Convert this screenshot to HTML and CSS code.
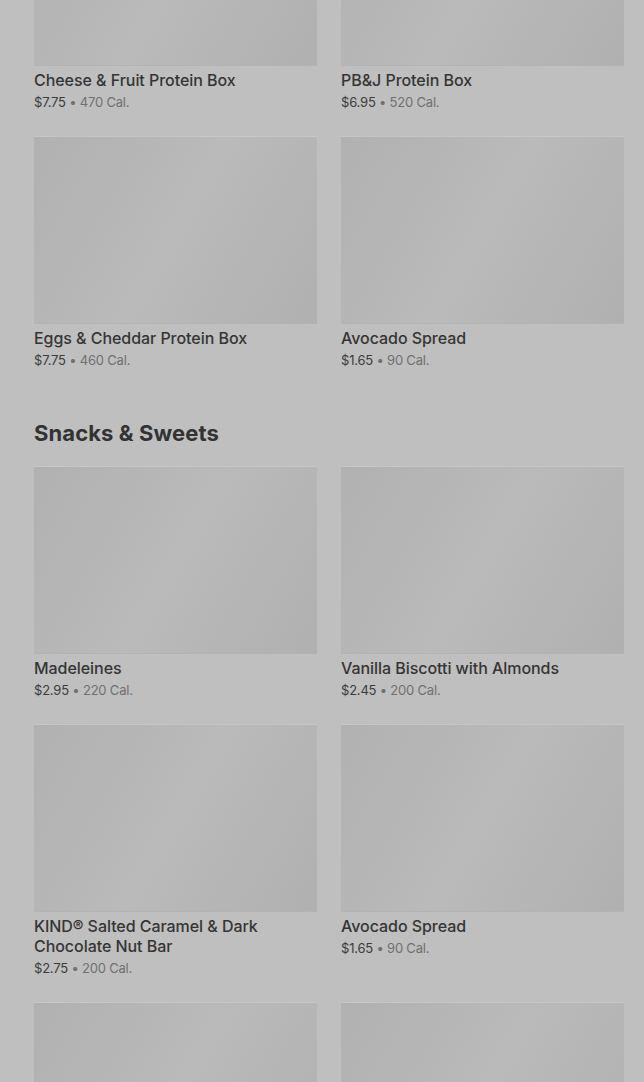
FILE: index.html
```html
<!DOCTYPE html>
<html>
<head>
  <title>Menu</title>
  <link rel="stylesheet" href="styles.css">
</head>
<body>
  <div class="menu">
    <section class="category first">
      <div class="items">
        <div class="item">
          <div class="thumb"></div>
          <div class="name">Cheese &amp; Fruit Protein Box</div>
          <div class="meta"><span class="price">$7.75</span> • 470 Cal.</div>
        </div>
        <div class="item">
          <div class="thumb"></div>
          <div class="name">PB&amp;J Protein Box</div>
          <div class="meta"><span class="price">$6.95</span> • 520 Cal.</div>
        </div>
        <div class="item">
          <div class="thumb"></div>
          <div class="name">Eggs &amp; Cheddar Protein Box</div>
          <div class="meta"><span class="price">$7.75</span> • 460 Cal.</div>
        </div>
        <div class="item">
          <div class="thumb"></div>
          <div class="name">Avocado Spread</div>
          <div class="meta"><span class="price">$1.65</span> • 90 Cal.</div>
        </div>
      </div>
    </section>

    <section class="category">
      <h2>Snacks &amp; Sweets</h2>
      <div class="items">
        <div class="item">
          <div class="thumb"></div>
          <div class="name">Madeleines</div>
          <div class="meta"><span class="price">$2.95</span> • 220 Cal.</div>
        </div>
        <div class="item">
          <div class="thumb"></div>
          <div class="name">Vanilla Biscotti with Almonds</div>
          <div class="meta"><span class="price">$2.45</span> • 200 Cal.</div>
        </div>
        <div class="item">
          <div class="thumb"></div>
          <div class="name">KIND® Salted Caramel &amp; Dark Chocolate Nut Bar</div>
          <div class="meta"><span class="price">$2.75</span> • 200 Cal.</div>
        </div>
        <div class="item">
          <div class="thumb"></div>
          <div class="name">Avocado Spread</div>
          <div class="meta"><span class="price">$1.65</span> • 90 Cal.</div>
        </div>
        <div class="item">
          <div class="thumb"></div>
        </div>
        <div class="item">
          <div class="thumb"></div>
        </div>
      </div>
    </section>
  </div>
</body>
</html>
```

FILE: styles.css
```css
body {
  margin: 0;
  background: #bfbfbf;
  font-family: Inter, "Noto Sans", sans-serif;
  overflow: hidden;
}

.menu {
  padding: 0 20px 0 34px;
}

.category.first {
  margin-top: -122px;
}

.category + .category {
  margin-top: 49px;
}

.category h2 {
  margin: 0 0 19px;
  font-size: 22px;
  line-height: 28px;
  font-weight: 700;
  color: #333;
  letter-spacing: 0.1px;
}

.items {
  display: grid;
  grid-template-columns: 1fr 1fr;
  column-gap: 24px;
  row-gap: 24px;
}

.thumb {
  height: 188px;
  background: linear-gradient(120deg, #b1b1b1 0%, #b6b6b6 30%, #bababa 50%, #b5b5b5 75%, #b0b0b0 100%);
  border-top: 1px solid #c6c6c6;
  border-bottom: 1px solid #b3b3b3;
  box-sizing: border-box;
}

.name {
  margin-top: 4px;
  font-size: 16px;
  line-height: 20px;
  font-weight: 500;
  color: #353535;
  letter-spacing: -0.05px;
}

.meta {
  margin-top: 2px;
  font-size: 13px;
  line-height: 20px;
  color: #707070;
  letter-spacing: -0.2px;
}

.meta .price {
  color: #3c3c3c;
}
```
